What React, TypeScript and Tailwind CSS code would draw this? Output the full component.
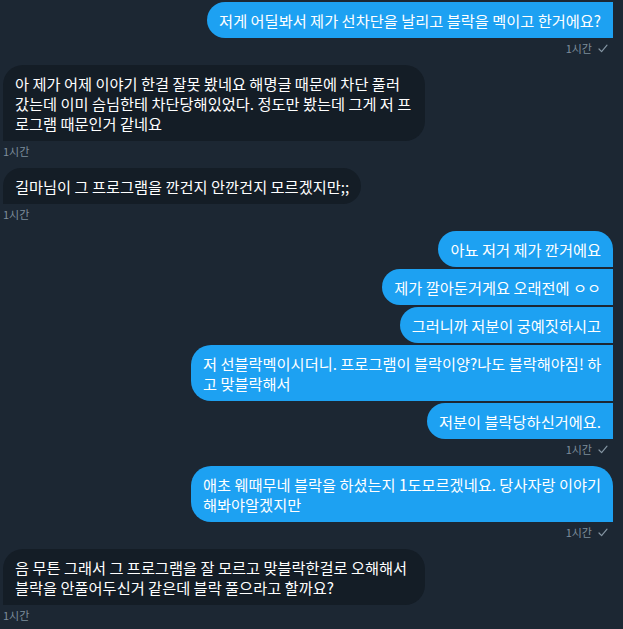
import React from "react";

type Msg =
  | { kind: "partial" }
  | { kind: "sent"; lines: string[]; multi?: boolean; trSquare?: boolean; brSquare?: boolean; gapAfter?: boolean }
  | { kind: "recv"; lines: string[]; multi?: boolean }
  | { kind: "ts"; side: "left" | "right" };

const FONT = { fontFamily: '"Noto Sans CJK KR", "Noto Sans", sans-serif' };

function Check() {
  return (
    <svg width="10" height="9" viewBox="0 0 10 9" fill="none" className="shrink-0">
      <path d="M1 5 L3.6 7.6 L9 1.2" stroke="#8495a3" strokeWidth="1.2" strokeLinecap="round" strokeLinejoin="round" />
    </svg>
  );
}

function Lines({ lines }: { lines: string[] }) {
  return (
    <>
      {lines.map((l, i) => (
        <div key={i} className="whitespace-nowrap">
          {l}
        </div>
      ))}
    </>
  );
}

export default function App() {
  const items: Msg[] = [
    { kind: "partial" },
    { kind: "sent", lines: ["저게 어딜봐서 제가 선차단을 날리고 블락을 멕이고 한거에요?"], trSquare: true, brSquare: true },
    { kind: "ts", side: "right" },
    {
      kind: "recv",
      multi: true,
      lines: [
        "아 제가 어제 이야기 한걸 잘못 봤네요 해명글 때문에 차단 풀러",
        "갔는데 이미 슴님한테 차단당해있었다. 정도만 봤는데 그게 저 프",
        "로그램 때문인거 같네요",
      ],
    },
    { kind: "ts", side: "left" },
    { kind: "recv", lines: ["길마님이 그 프로그램을 깐건지 안깐건지 모르겠지만;;"] },
    { kind: "ts", side: "left" },
    { kind: "sent", lines: ["아뇨 저거 제가 깐거에요"], brSquare: true, gapAfter: true },
    { kind: "sent", lines: ["제가 깔아둔거게요 오래전에 ㅇㅇ"], trSquare: true, brSquare: true, gapAfter: true },
    { kind: "sent", lines: ["그러니까 저분이 궁예짓하시고"], trSquare: true, brSquare: true, gapAfter: true },
    {
      kind: "sent",
      multi: true,
      lines: ["저 선블락멕이시더니. 프로그램이 블락이양?나도 블락해야짐! 하", "고 맞블락해서"],
      trSquare: true,
      brSquare: true,
      gapAfter: true,
    },
    { kind: "sent", lines: ["저분이 블락당하신거에요."], trSquare: true, brSquare: true },
    { kind: "ts", side: "right" },
    {
      kind: "sent",
      multi: true,
      lines: ["애초 웨때무네 블락을 하셨는지 1도모르겠네요. 당사자랑 이야기", "해봐야알겠지만"],
      brSquare: true,
    },
    { kind: "ts", side: "right" },
    {
      kind: "recv",
      multi: true,
      lines: ["음 무튼 그래서 그 프로그램을 잘 모르고 맞블락한걸로 오해해서", "블락을 안풀어두신거 같은데 블락 풀으라고 할까요?"],
    },
    { kind: "ts", side: "left" },
  ];

  return (
    <div className="w-[623px] h-[629px] overflow-hidden bg-[#1c2733] pl-[3px] pr-[10px] flex flex-col" style={FONT}>
      {items.map((m, i) => {
        if (m.kind === "partial") {
          return <div key={i} className="self-end w-[104px] h-[2px] mb-[2px] bg-[#1da1f2] rounded-bl-[4px]" />;
        }
        if (m.kind === "ts") {
          return m.side === "right" ? (
            <div key={i} className="flex justify-end items-center gap-[6px] pr-[5px] pt-[3px] pb-[10px] h-[27px] text-[11px] leading-[14px] text-[#7d8d9b]">
              <span>1시간</span>
              <Check />
            </div>
          ) : (
            <div key={i} className="flex items-center pt-[3px] pb-[10px] h-[27px] text-[11px] leading-[14px] text-[#7d8d9b]">
              <span>1시간</span>
            </div>
          );
        }
        if (m.kind === "sent") {
          return (
            <div
              key={i}
              className={
                "self-end bg-[#1da1f2] text-white text-[15.25px] leading-5 px-3 py-2 rounded-[20px] " +
                (m.multi ? "w-[422px] " : "w-fit ") +
                (m.trSquare ? "rounded-tr-none " : "") +
                (m.brSquare ? "rounded-br-none " : "") +
                (m.gapAfter ? "mb-[2px]" : "")
              }
            >
              <Lines lines={m.lines} />
            </div>
          );
        }
        return (
          <div
            key={i}
            className={
              "self-start bg-[#141d26] text-white text-[15.25px] leading-5 px-3 py-2 rounded-[20px] rounded-bl-none " +
              (m.multi ? "w-[422px]" : "w-fit")
            }
          >
            <Lines lines={m.lines} />
          </div>
        );
      })}
    </div>
  );
}
